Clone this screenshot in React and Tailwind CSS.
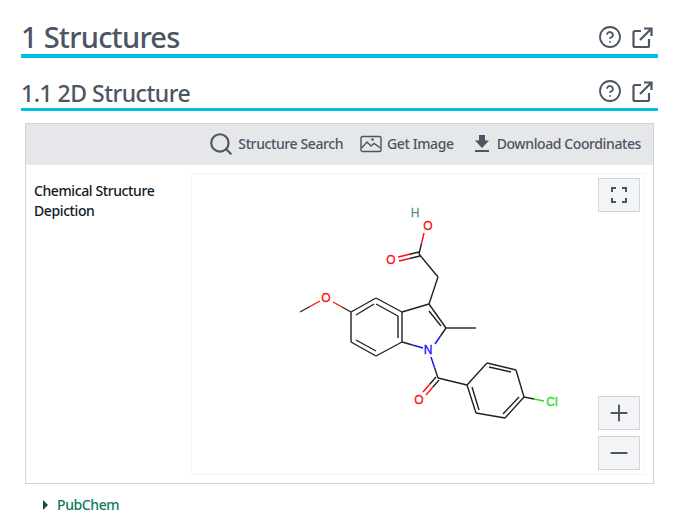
import React from "react";
import { CircleHelp, Search, Plus, Minus } from "lucide-react";

const bonds = [
	// acid side chain
	[424, 233, 419, 254, "#ff0d0d", "#222"],
	[419, 254, 438, 277],
	[438, 277, 429, 304],
	[419, 252, 398, 257, "#222", "#ff0d0d"],
	[420, 256, 399, 261, "#222", "#ff0d0d"],
	// six ring
	[429, 304, 402, 312],
	[402, 312, 376, 298],
	[398, 316, 376, 304],
	[376, 298, 351, 312],
	[374, 304, 356, 315],
	[351, 312, 351, 342],
	[351, 342, 376, 356],
	[356, 340, 376, 351],
	[376, 356, 402, 342],
	[402, 342, 402, 312],
	[398, 338, 398, 316],
	// methoxy
	[351, 312, 333, 302, "#222", "#ff0d0d"],
	[320, 301, 300, 312, "#ff0d0d", "#222"],
	// five ring
	[429, 304, 446, 328],
	[429, 311, 441, 326],
	[446, 328, 476, 328],
	[446, 328, 435, 344, "#222", "#0d0dff"],
	[402, 342, 423, 348, "#222", "#0d0dff"],
	// amide
	[431, 357, 438, 378, "#0d0dff", "#222"],
	[438, 378, 467, 385],
	[436, 377, 423, 392, "#222", "#ff0d0d"],
	[439, 380, 426, 395, "#222", "#ff0d0d"],
	// chlorophenyl
	[467, 385, 487, 363],
	[487, 363, 516, 370],
	[489, 367, 511, 372],
	[516, 370, 524, 397],
	[524, 397, 505, 418],
	[519, 397, 503, 414],
	[505, 418, 476, 413],
	[476, 413, 467, 385],
	[479, 410, 472, 387],
	[524, 397, 544, 401, "#222", "#22dd22"],
];

const atoms = [
	["H", 415, 217, "#5f9090"],
	["O", 428, 230, "#ff0d0d"],
	["O", 391, 264, "#ff0d0d"],
	["O", 326, 302, "#ff0d0d"],
	["N", 428, 354, "#0d0dff"],
	["O", 419, 404, "#ff0d0d"],
	["Cl", 552, 406, "#22dd22"],
];

const Molecule = () => (
	<svg className="block" width="452" height="300" viewBox="192 174 452 300">
		{bonds.map(([x1, y1, x2, y2, c1, c2], i) => {
			if (!c1) {
				return <line key={i} x1={x1} y1={y1} x2={x2} y2={y2} stroke="#222" strokeWidth="1.4" />;
			}
			const mx = (x1 + x2) / 2;
			const my = (y1 + y2) / 2;
			return (
				<g key={i} strokeWidth="1.4">
					<line x1={x1} y1={y1} x2={mx} y2={my} stroke={c1} />
					<line x1={mx} y1={my} x2={x2} y2={y2} stroke={c2} />
				</g>
			);
		})}
		{atoms.map(([t, x, y, c], i) => (
			<text key={i} x={x} y={y} fill={c} stroke={c} strokeWidth="0.3" fontSize="12" textAnchor="middle" fontFamily="'Liberation Sans', sans-serif">
				{t}
			</text>
		))}
	</svg>
);

const ImageIcon = () => (
	<svg width="22" height="18" viewBox="0 0 22 18" fill="none" stroke="#4b5563" strokeWidth="1.4">
		<rect x="1" y="1.5" width="20" height="15" rx="1.5" />
		<path d="M1.5 13 L7 7 L11 11 L14 8.5 L20.5 13" />
		<circle cx="12.5" cy="4.5" r="0.6" fill="#4b5563" />
	</svg>
);

const DownloadIcon = () => (
	<svg width="14" height="17" viewBox="0 0 14 17" fill="#4b5563">
		<path d="M4 0h6v5.5h4L7 13 0 5.5h4z" />
		<rect x="0" y="15" width="14" height="2" />
	</svg>
);

const ExternalIcon = () => (
	<svg width="22" height="24" viewBox="0 0 22 24" fill="none" stroke="#4b5563" strokeWidth="2.2">
		<path d="M10 6H4a1.5 1.5 0 0 0-1.5 1.5v13A1.5 1.5 0 0 0 4 22h12.5a1.5 1.5 0 0 0 1.5-1.5V14" />
		<path d="M9 15L20 4M13 3.5h7.5V11" />
	</svg>
);

const FullscreenIcon = () => (
	<svg width="16" height="16" viewBox="0 0 16 16" fill="none" stroke="#4b5563" strokeWidth="2">
		<path d="M1 5V1h4M11 1h4v4M15 11v4h-4M5 15H1v-4" />
	</svg>
);

const Heading = ({ title, big }) => (
	<div
		className={
			big
				? "flex items-end justify-between h-[58px] border-b-4 border-[#00bfe6]"
				: "flex items-end justify-between h-[53px] border-b-[3px] border-[#00bfe6]"
		}
	>
		<h2
			className={
				big
					? "text-[29px] leading-[38px] -tracking-[0.75px] font-medium text-[#4b5563] -mb-[2px]"
					: "text-[23px] leading-[32px] -tracking-[0.5px] font-medium text-[#4b5563] -mb-[1px]"
			}
		>
			{title}
		</h2>
		<div className="flex items-center gap-[9px] mr-[5px] mb-[5px]">
			<CircleHelp size={24} strokeWidth={1.8} color="#4b5563" />
			<ExternalIcon />
		</div>
	</div>
);

const CanvasButton = ({ children, className }) => (
	<button className={"absolute right-[4px] w-[42px] h-[34px] flex items-center justify-center bg-[#f3f4f6] border border-[#d1d5db] " + className}>
		{children}
	</button>
);

export default function App() {
	return (
		<div className="w-[679px] h-[527px] overflow-hidden bg-white pl-[21px] pr-[21px] font-['Noto_Sans',sans-serif]">
			<Heading title="1 Structures" big />
			<Heading title="1.1 2D Structure" />
			<div className="mt-3 ml-1 mr-1 h-[361px] border border-[#d1d5db]">
				<div className="h-[41px] bg-[#e5e7eb] flex items-center justify-end pr-3 pb-[2px] text-[14px] -tracking-[0.4px] font-medium text-[#4b5563]">
					<Search size={26} strokeWidth={2} className="mr-1" />
					<span>Structure Search</span>
					<span className="ml-[17px] mr-[5px]"><ImageIcon /></span>
					<span>Get Image</span>
					<span className="ml-[21px] mr-[8px]"><DownloadIcon /></span>
					<span>Download Coordinates</span>
				</div>
				<div className="flex pt-2 pl-2 pr-[9px]">
					<div className="w-[157px] shrink-0 text-[14px] leading-5 pt-2 -tracking-[0.4px] font-medium text-[#111827]">
						Chemical Structure
						<br />
						Depiction
					</div>
					<div className="relative w-[454px] h-[302px] border border-[#f3f4f6]">
						<Molecule />
						<CanvasButton className="top-[4px]"><FullscreenIcon /></CanvasButton>
						<CanvasButton className="top-[222px]"><Plus size={26} strokeWidth={1.8} color="#4b5563" /></CanvasButton>
						<CanvasButton className="top-[262px]"><Minus size={26} strokeWidth={2} color="#4b5563" /></CanvasButton>
					</div>
				</div>
			</div>
			<div className="mt-[10px] ml-[22px] flex items-center gap-[9px] text-[14px] -tracking-[0.4px] font-medium text-[#0e7a5f]">
				<span className="w-0 h-0 border-y-[5px] border-y-transparent border-l-[5px] border-l-[#14532d]" />
				<span>PubChem</span>
			</div>
		</div>
	);
}
